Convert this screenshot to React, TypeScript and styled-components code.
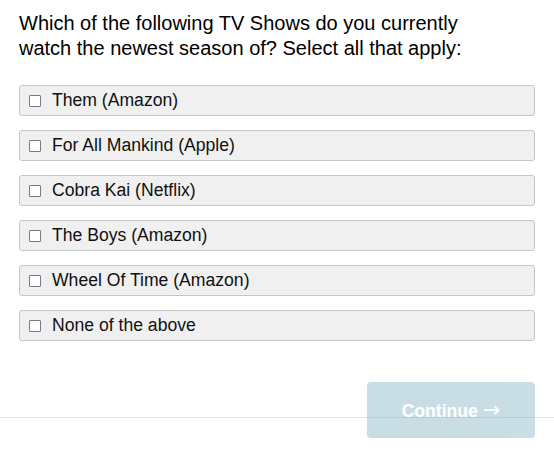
import React, { useState } from 'react'
import styled, { createGlobalStyle } from 'styled-components';

const GlobalStyle = createGlobalStyle`
  html, body {
    margin: 0;
    padding: 0;
    background: #fff;
  }
  body {
    font-family: "Liberation Sans", Arial, Helvetica, sans-serif;
    color: #111;
  }
`;

const shows = [
  "Them (Amazon)",
  "For All Mankind (Apple)",
  "Cobra Kai (Netflix)",
  "The Boys (Amazon)",
  "Wheel Of Time (Amazon)",
  "None of the above",
];

const App: React.FC = () => {
  const [checked, setChecked] = useState<string[]>([]);

  const toggle = (name: string) => {
    setChecked(prev =>
      prev.includes(name) ? prev.filter(n => n !== name) : [...prev, name]
    );
  };

  return (
    <>
      <GlobalStyle />
      <Page>
        <Question>
          Which of the following TV Shows do you currently watch the newest
          season of? Select all that apply:
        </Question>
        <OptionList>
          {shows.map(show => (
            <Option key={show}>
              <CheckInput
                type="checkbox"
                checked={checked.includes(show)}
                onChange={() => toggle(show)}
              />
              <OptionLabel>{show}</OptionLabel>
            </Option>
          ))}
        </OptionList>
      </Page>
      <Footer>
        <ContinueButton disabled={checked.length === 0}>
          Continue <Arrow>→</Arrow>
        </ContinueButton>
      </Footer>
    </>
  );
};

export default App

export const Page = styled.div`
    padding: 11px 19px 0;
`;

export const Question = styled.h1`
    margin: 0;
    max-width: 470px;
    font-size: 20px;
    line-height: 25px;
    font-weight: 400;
    color: #000;
`;

export const OptionList = styled.div`
    margin-top: 24px;
    display: flex;
    flex-direction: column;
    gap: 14px;
`;

export const Option = styled.label`
    display: flex;
    align-items: center;
    height: 31px;
    box-sizing: border-box;
    padding: 0 9px 2px;
    background-color: #f0f0f0;
    border: 1px solid #c6c6c6;
    border-radius: 3px;
    cursor: pointer;
`;

export const CheckInput = styled.input`
    appearance: none;
    margin: 2px 11px 0 0;
    width: 12px;
    height: 12px;
    box-sizing: border-box;
    border: 1px solid #7d7788;
    border-radius: 1px;
    background: #fff;
    flex-shrink: 0;
    &:checked {
        background: #4b94a8;
        border-color: #4b94a8;
    }
`;

export const OptionLabel = styled.span`
    font-size: 17.6px;
    line-height: 20px;
    color: #111;
`;

export const Footer = styled.div`
    margin-top: 76px;
    border-top: 1px solid #e6e6e6;
    display: flex;
    justify-content: flex-end;
    padding: 0 19px;
`;

export const ContinueButton = styled.button`
    margin-top: -36px;
    width: 168px;
    height: 56px;
    padding: 0;
    border: none;
    border-radius: 4px;
    background-color: #4b94a8;
    opacity: 0.3;
    color: #fff;
    font-family: "Liberation Sans", Arial, Helvetica, sans-serif;
    font-size: 17.6px;
    font-weight: 700;
    line-height: 20px;
    cursor: pointer;
    &:disabled {
        cursor: default;
    }
`;

export const Arrow = styled.span`
    font-family: "DejaVu Sans", sans-serif;
    font-weight: 400;
    font-size: 21px;
    line-height: 1;
`;
